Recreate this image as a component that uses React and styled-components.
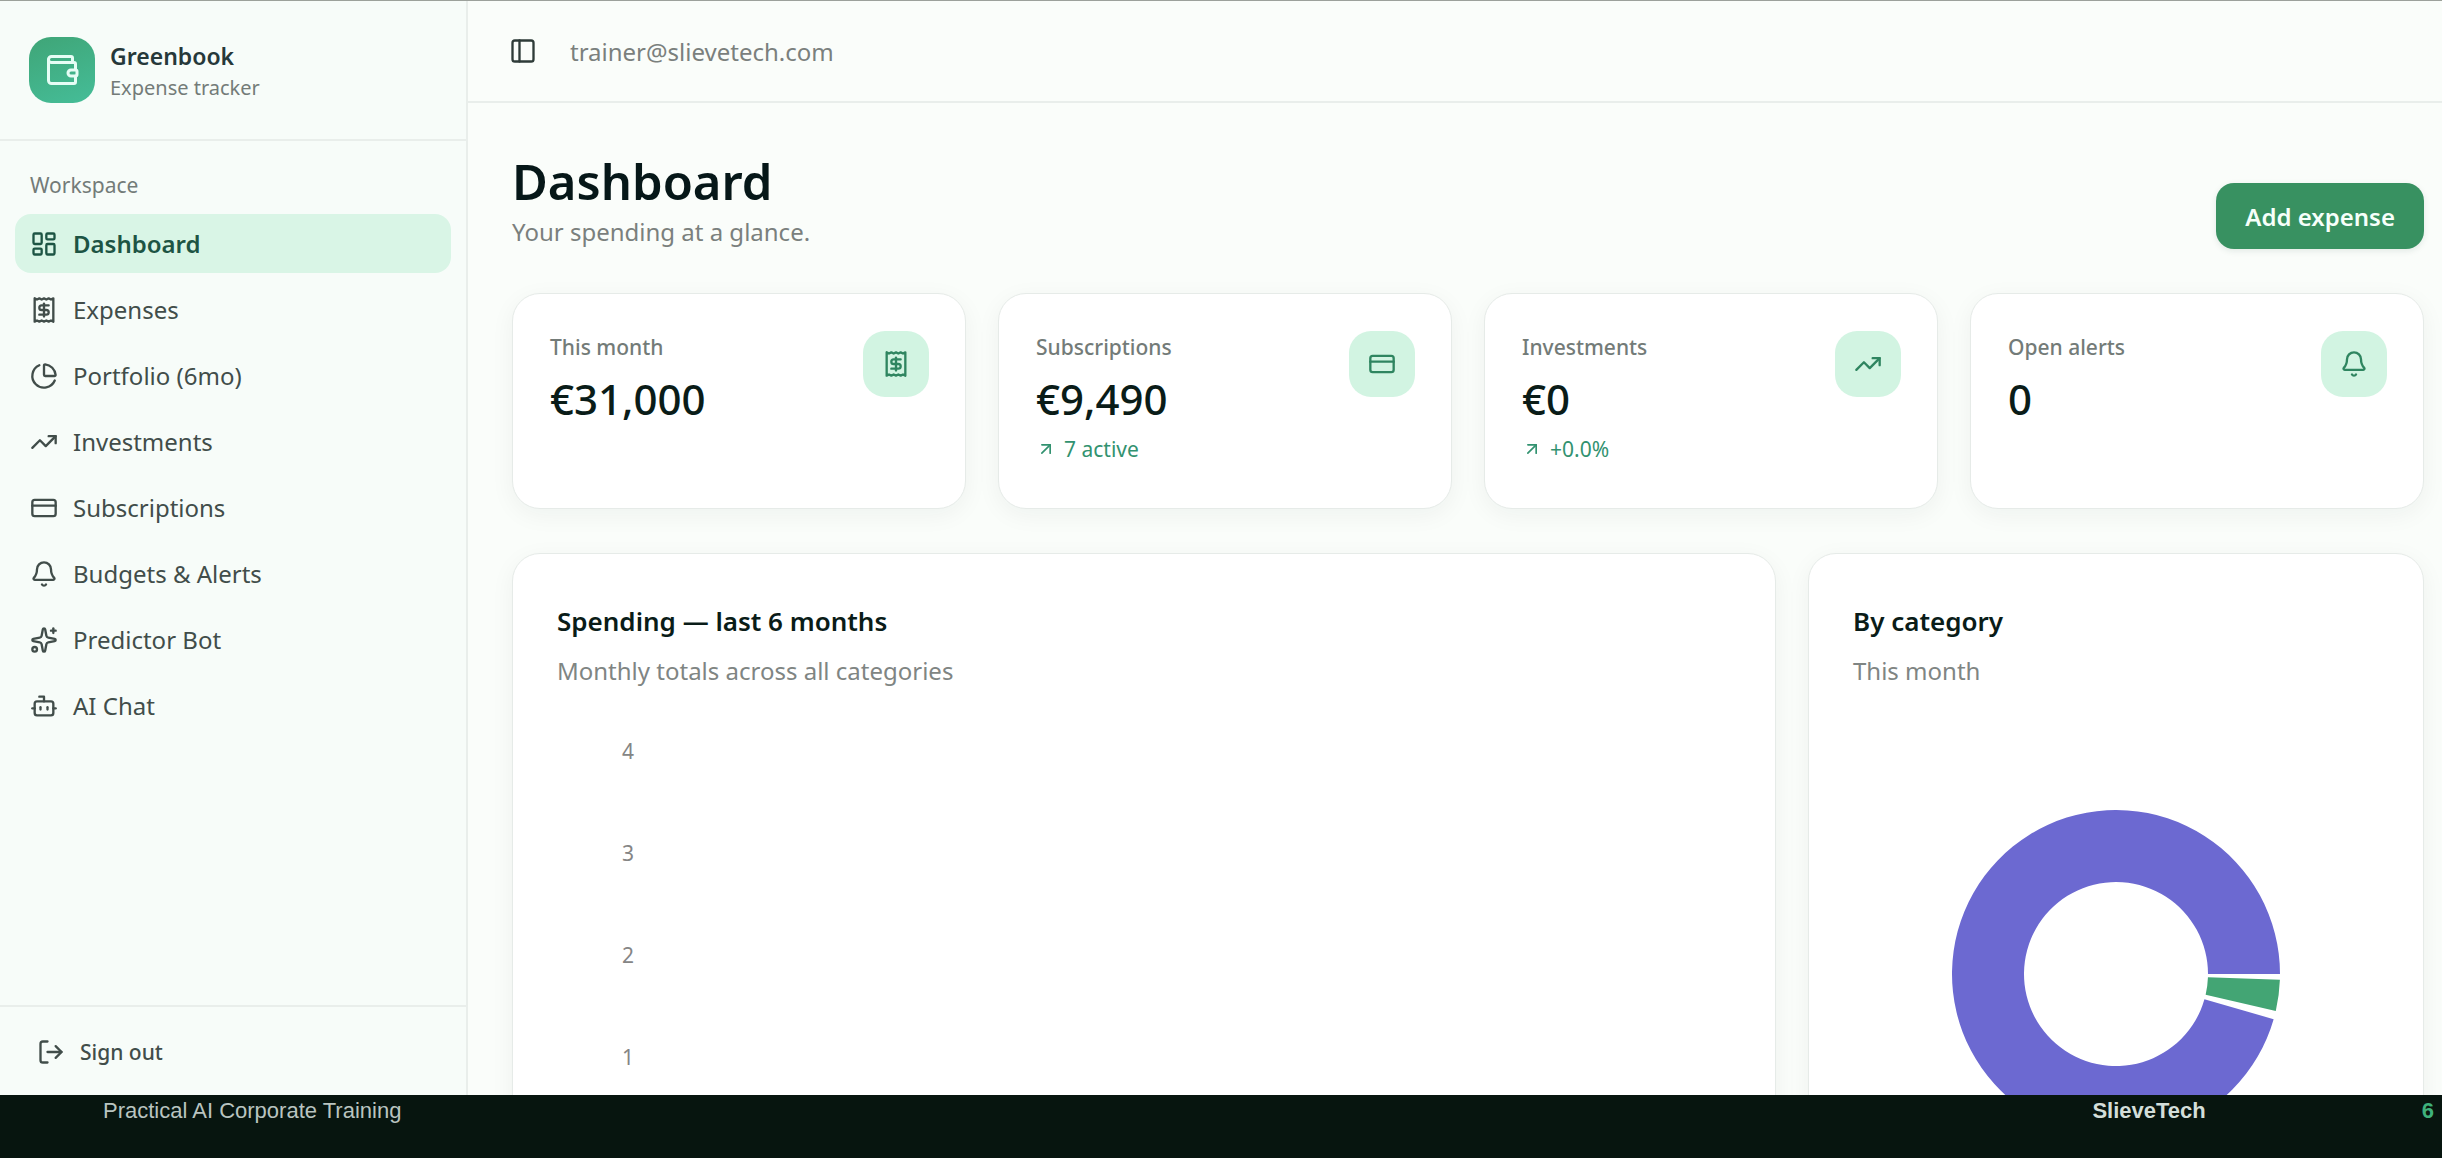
import React, { useState } from "react";
import styled, { createGlobalStyle, css } from "styled-components";
import {
  ArrowUpRight,
  Bell,
  Bot,
  ChartPie,
  CreditCard,
  LayoutDashboard,
  LogOut,
  PanelLeft,
  Receipt,
  Sparkles,
  TrendingUp,
  Wallet
} from "lucide-react";

const GlobalStyle = createGlobalStyle`
  * {
    box-sizing: border-box;
  }

  body {
    margin: 0;
    font-family: "Noto Sans", "Open Sans", sans-serif;
    color: #0a1c18;
    background: #fafdfa;
  }

  h1, h2, p {
    margin: 0;
  }

  button {
    font-family: inherit;
    cursor: pointer;
  }
`;

const Screen = styled.div`
  display: flex;
  flex-direction: column;
  height: 100vh;
  overflow: hidden;
  border-top: 1px solid #9ca19b;
`;

const Workspace = styled.div`
  display: flex;
  flex: 1;
  min-height: 0;
`;

const Sidebar = styled.aside`
  display: flex;
  flex-direction: column;
  flex: none;
  width: 468px;
  background: #f7fcf9;
  border-right: 2px solid #e9eeeb;
`;

const Brand = styled.div`
  display: flex;
  align-items: center;
  gap: 15px;
  height: 140px;
  padding: 0 29px;
  border-bottom: 2px solid #e9eeeb;
`;

const Logo = styled.div`
  display: flex;
  align-items: center;
  justify-content: center;
  width: 66px;
  height: 66px;
  border-radius: 22px;
  color: #e6fdf5;
  background: linear-gradient(160deg, #3fa577, #45bd98);
`;

const BrandText = styled.div`
  padding-top: 3px;
`;

const BrandName = styled.p`
  font-size: 23px;
  font-weight: 600;
  line-height: 32px;
  color: #26383a;
`;

const BrandNote = styled.p`
  font-size: 20px;
  line-height: 32px;
  color: #737b78;
`;

const Nav = styled.nav`
  display: flex;
  flex-direction: column;
  flex: 1;
  gap: 7px;
  padding: 23px 15px;
`;

const NavTitle = styled.p`
  padding: 0 15px;
  font-size: 21px;
  line-height: 43px;
  color: #737b78;
`;

const NavLink = styled.a`
  display: flex;
  align-items: center;
  gap: 15px;
  height: 59px;
  padding: 0 15px;
  border-radius: 16px;
  font-size: 24px;
  color: #414d4a;
  text-decoration: none;

  ${props =>
    props.$active &&
    css`
      font-weight: 600;
      color: #1d5444;
      background: #d9f5e6;
    `}
`;

const SidebarFooter = styled.div`
  height: 90px;
  padding: 15px;
  border-top: 2px solid #e9eeeb;
`;

const SignOutButton = styled.button`
  display: flex;
  align-items: center;
  gap: 15px;
  width: 100%;
  height: 59px;
  padding: 0 22px;
  border: none;
  background: none;
  font-size: 21px;
  font-weight: 500;
  color: #414d4a;
`;

const Main = styled.main`
  flex: 1;
  min-width: 0;
  overflow: hidden;
`;

const TopBar = styled.header`
  display: flex;
  align-items: center;
  gap: 24px;
  height: 102px;
  padding: 0 32px;
  border-bottom: 2px solid #e9eeeb;
`;

const ToggleButton = styled.button`
  display: flex;
  align-items: center;
  justify-content: center;
  width: 46px;
  height: 46px;
  padding: 0;
  border: none;
  background: none;
  color: #2e3b38;
`;

const Email = styled.span`
  font-size: 24px;
  color: #7a807d;
`;

const Content = styled.div`
  display: flex;
  flex-direction: column;
  gap: 44px;
  padding: 45px 18px 45px 44px;
`;

const PageHead = styled.div`
  display: flex;
  align-items: flex-end;
  justify-content: space-between;
`;

const PageTitle = styled.h1`
  font-size: 49px;
  font-weight: 600;
  line-height: 66px;
  color: #061718;
`;

const PageNote = styled.p`
  font-size: 24px;
  line-height: 35px;
  color: #7a807d;
`;

const AddButton = styled.button`
  height: 66px;
  padding: 0 29px;
  border: none;
  border-radius: 18px;
  background: #389161;
  box-shadow: 0 2px 6px rgba(20, 60, 45, 0.1);
  font-size: 24px;
  font-weight: 600;
  color: #f6fffa;
`;

const StatGrid = styled.div`
  display: grid;
  grid-template-columns: repeat(4, 1fr);
  gap: 32px;
`;

const Card = styled.section`
  border: 1px solid #e6ebe8;
  border-radius: 28px;
  background: #ffffff;
  box-shadow: 0 6px 24px rgba(20, 40, 35, 0.05);
`;

const StatCardBox = styled(Card)`
  display: flex;
  justify-content: space-between;
  padding: 37px 36px 45px 37px;
`;

const StatText = styled.div`
  display: flex;
  flex-direction: column;
  gap: 6px;
`;

const StatLabel = styled.p`
  font-size: 21px;
  font-weight: 500;
  line-height: 32px;
  color: #737b78;
`;

const StatValue = styled.p`
  font-size: 42px;
  font-weight: 500;
  line-height: 60px;
`;

const StatHint = styled.p`
  display: flex;
  align-items: center;
  gap: 8px;
  font-size: 21px;
  line-height: 28px;
  color: #329270;
`;

const StatIcon = styled.div`
  display: flex;
  align-items: center;
  justify-content: center;
  width: 66px;
  height: 66px;
  border-radius: 22px;
  color: #2f8560;
  background: #d2f4e2;
`;

const ChartGrid = styled.div`
  display: grid;
  grid-template-columns: repeat(3, 1fr);
  gap: 32px;
`;

const ChartCard = styled(Card)`
  grid-column: span ${props => props.$span || 1};
  padding: 45px 44px 44px;
`;

const ChartTitle = styled.h2`
  font-size: 26px;
  font-weight: 600;
  line-height: 44px;
`;

const ChartNote = styled.p`
  margin-top: 8px;
  font-size: 24px;
  line-height: 40px;
  color: #7f8583;
`;

const ChartArea = styled.div`
  display: flex;
  align-items: center;
  justify-content: center;
  height: 494px;
  margin-top: 36px;
`;

const AxisLabel = styled.text`
  font-size: 21px;
  fill: #858585;
`;

const Footer = styled.footer`
  display: flex;
  flex: none;
  align-items: flex-start;
  gap: 216px;
  height: 63px;
  padding: 2px 8px 0 103px;
  background: #07150f;
  font-family: "Liberation Sans", Arial, sans-serif;
  font-size: 22px;
  line-height: 28px;
  color: #b9c4c0;
`;

const FooterBrand = styled.strong`
  margin-left: auto;
  color: #d3ded9;
`;

const FooterPage = styled.strong`
  color: #3fb17c;
`;

const navItems = [
  { label: "Dashboard", icon: LayoutDashboard },
  { label: "Expenses", icon: Receipt },
  { label: "Portfolio (6mo)", icon: ChartPie },
  { label: "Investments", icon: TrendingUp },
  { label: "Subscriptions", icon: CreditCard },
  { label: "Budgets & Alerts", icon: Bell },
  { label: "Predictor Bot", icon: Sparkles },
  { label: "AI Chat", icon: Bot }
];

const stats = [
  { label: "This month", value: "€31,000", icon: Receipt },
  { label: "Subscriptions", value: "€9,490", hint: "7 active", icon: CreditCard },
  { label: "Investments", value: "€0", hint: "+0.0%", icon: TrendingUp },
  { label: "Open alerts", value: "0", icon: Bell }
];

const slices = [
  { name: "green", from: 2, to: 13, color: "#43a574" },
  { name: "violet", from: 16, to: 360, color: "#6c69d1" }
];

const OUTER = 164;
const INNER = 92;

// ring segment, angles in degrees clockwise from three o'clock
const ringPath = (from, to) => {
  const point = (radius, angle) => {
    const rad = (angle * Math.PI) / 180;
    return `${radius * Math.cos(rad)} ${radius * Math.sin(rad)}`;
  };
  const large = to - from > 180 ? 1 : 0;
  return [
    `M ${point(OUTER, from)}`,
    `A ${OUTER} ${OUTER} 0 ${large} 1 ${point(OUTER, to)}`,
    `L ${point(INNER, to)}`,
    `A ${INNER} ${INNER} 0 ${large} 0 ${point(INNER, from)}`,
    "Z"
  ].join(" ");
};

const StatCard = ({ label, value, hint, icon: Icon }) => (
  <StatCardBox>
    <StatText>
      <StatLabel>{label}</StatLabel>
      <StatValue>{value}</StatValue>
      {hint && (
        <StatHint>
          <ArrowUpRight size={20} />
          {hint}
        </StatHint>
      )}
    </StatText>
    <StatIcon>
      <Icon size={28} />
    </StatIcon>
  </StatCardBox>
);

const SpendingChart = () => (
  <svg width="100%" height="494" role="img" aria-label="Spending">
    {[4, 3, 2, 1].map((tick, i) => (
      <AxisLabel key={tick} x="77" y={32 + i * 102} textAnchor="end">
        {tick}
      </AxisLabel>
    ))}
  </svg>
);

const CategoryChart = () => (
  <svg width="328" height="328" viewBox="-164 -164 328 328" role="img" aria-label="Categories">
    {slices.map(slice => (
      <path key={slice.name} d={ringPath(slice.from, slice.to)} fill={slice.color} />
    ))}
  </svg>
);

const App = () => {
  const [active, setActive] = useState("Dashboard");

  return (
    <Screen>
      <GlobalStyle />
      <Workspace>
        <Sidebar>
          <Brand>
            <Logo>
              <Wallet size={36} />
            </Logo>
            <BrandText>
              <BrandName>Greenbook</BrandName>
              <BrandNote>Expense tracker</BrandNote>
            </BrandText>
          </Brand>
          <Nav>
            <NavTitle>Workspace</NavTitle>
            {navItems.map(({ label, icon: Icon }) => (
              <NavLink
                key={label}
                href="#"
                $active={label === active}
                onClick={() => setActive(label)}
              >
                <Icon size={28} />
                {label}
              </NavLink>
            ))}
          </Nav>
          <SidebarFooter>
            <SignOutButton type="button">
              <LogOut size={28} />
              Sign out
            </SignOutButton>
          </SidebarFooter>
        </Sidebar>
        <Main>
          <TopBar>
            <ToggleButton type="button" aria-label="Toggle sidebar">
              <PanelLeft size={28} />
            </ToggleButton>
            <Email>trainer@slievetech.com</Email>
          </TopBar>
          <Content>
            <PageHead>
              <div>
                <PageTitle>Dashboard</PageTitle>
                <PageNote>Your spending at a glance.</PageNote>
              </div>
              <AddButton type="button">Add expense</AddButton>
            </PageHead>
            <StatGrid>
              {stats.map(stat => (
                <StatCard key={stat.label} {...stat} />
              ))}
            </StatGrid>
            <ChartGrid>
              <ChartCard $span={2}>
                <ChartTitle>Spending — last 6 months</ChartTitle>
                <ChartNote>Monthly totals across all categories</ChartNote>
                <ChartArea>
                  <SpendingChart />
                </ChartArea>
              </ChartCard>
              <ChartCard>
                <ChartTitle>By category</ChartTitle>
                <ChartNote>This month</ChartNote>
                <ChartArea>
                  <CategoryChart />
                </ChartArea>
              </ChartCard>
            </ChartGrid>
          </Content>
        </Main>
      </Workspace>
      <Footer>
        <span>Practical AI Corporate Training</span>
        <FooterBrand>SlieveTech</FooterBrand>
        <FooterPage>6</FooterPage>
      </Footer>
    </Screen>
  );
};

export default App;
